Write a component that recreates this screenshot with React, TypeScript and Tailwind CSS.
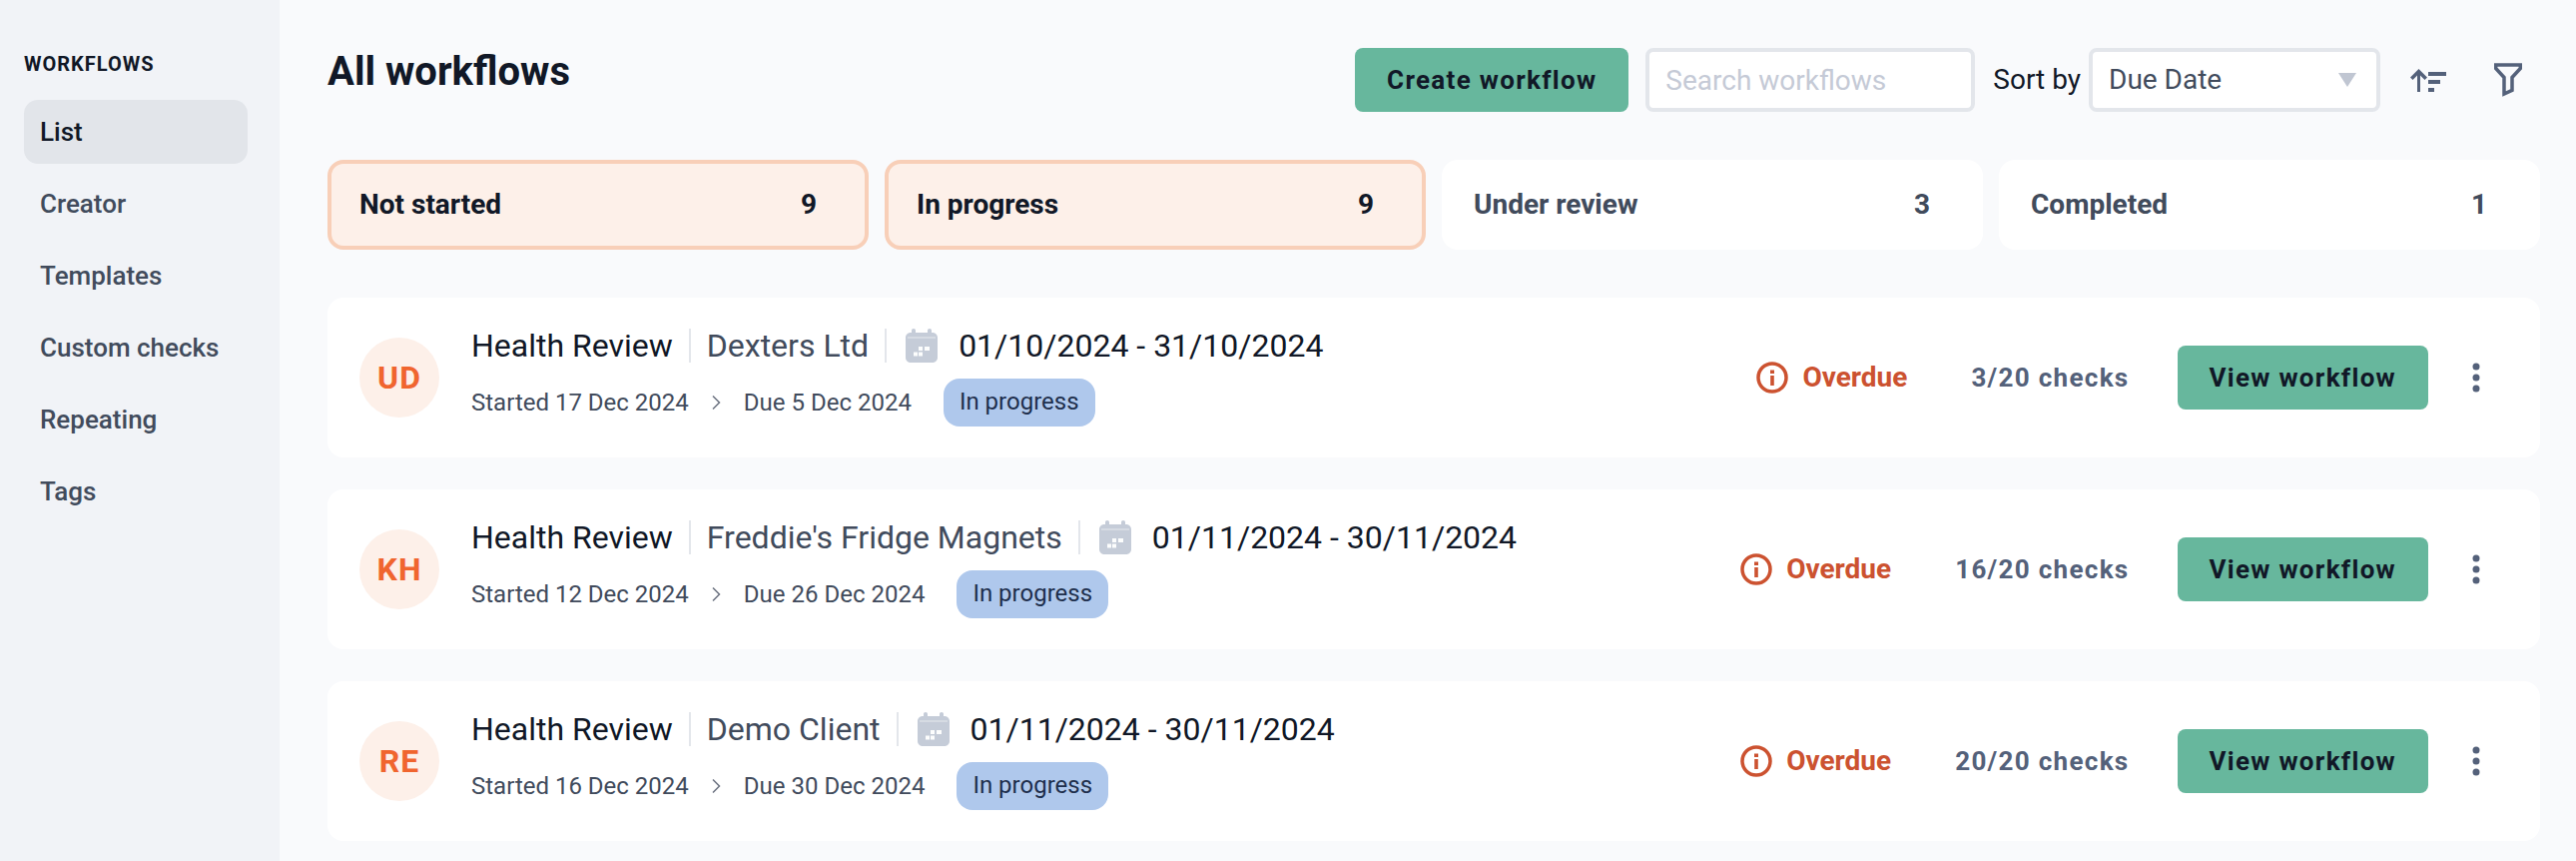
import React from 'react';

const navItems = ['List', 'Creator', 'Templates', 'Custom checks', 'Repeating', 'Tags'];

const tabs = [
  { label: 'Not started', count: 9, active: true },
  { label: 'In progress', count: 9, active: true },
  { label: 'Under review', count: 3, active: false },
  { label: 'Completed', count: 1, active: false },
];

const workflows = [
  { initials: 'UD', client: 'Dexters Ltd', period: '01/10/2024 - 31/10/2024', started: 'Started 17 Dec 2024', due: 'Due 5 Dec 2024', checks: '3/20 checks' },
  { initials: 'KH', client: "Freddie's Fridge Magnets", period: '01/11/2024 - 30/11/2024', started: 'Started 12 Dec 2024', due: 'Due 26 Dec 2024', checks: '16/20 checks' },
  { initials: 'RE', client: 'Demo Client', period: '01/11/2024 - 30/11/2024', started: 'Started 16 Dec 2024', due: 'Due 30 Dec 2024', checks: '20/20 checks' },
];

const CalendarIcon = () => (
  <svg width="32" height="34" viewBox="0 0 32 34" className="shrink-0">
    <path
      fill="#c5ccd8"
      d="M8 0c1.300 0 2 .9 2 2v2h12V2c0-1.100.7-2 2-2s2 .9 2 2v2h1c2.800 0 5 2.200 5 5v20c0 2.800-2.200 5-5 5H5c-2.800 0-5-2.200-5-5V9c0-2.800 2.200-5 5-5h1V2c0-1.100.7-2 2-2Z"
    />
    <path fill="#fff" d="M2 8.500h28v1H2z" opacity="0.6" />
    <path fill="#fff" d="M13 18h4v4h-4zM19 18h5v4h-5zM8 23.500h4v4H8zM13 23.500h4v4h-4z" opacity="0.95" />
  </svg>
);

const SortIcon = () => (
  <svg width="36" height="24" viewBox="0 0 36 24" fill="#54617a">
    <path d="M7 24V7.500L2.500 12 0 9.500 8.500 1 17 9.500 14.500 12 10 7.500V24H7Z" />
    <path d="M18 4h18v4H18zM18 12h12v4H18zM18 20h6v4h-6z" />
  </svg>
);

const FilterIcon = () => (
  <svg width="28" height="34" viewBox="0 0 28 34" fill="none" stroke="#54617a" strokeWidth="3.500">
    <path d="M1.700 2h24.600v3.500L18 14.500v12.800l-8 3.700V14.500L1.700 5.500V2Z" />
  </svg>
);

const InfoIcon = () => (
  <svg width="32" height="32" viewBox="0 0 32 32" fill="none" className="shrink-0">
    <circle cx="16" cy="16" r="14" stroke="#cc5230" strokeWidth="3.500" />
    <path d="M14 8.500h4v3.500h-4zM14.200 14h3.600v10h-3.600z" fill="#cc5230" />
  </svg>
);

const ChevronIcon = () => (
  <svg width="10" height="16" viewBox="0 0 10 16" fill="none" stroke="#6b7280" strokeWidth="1.500">
    <path d="M2 1.500 8.500 8 2 14.500" />
  </svg>
);

const DotsIcon = () => (
  <svg width="8" height="30" viewBox="0 0 8 30" fill="#54617a">
    <circle cx="4" cy="4" r="3.500" />
    <circle cx="4" cy="15" r="3.500" />
    <circle cx="4" cy="26" r="3.500" />
  </svg>
);

export default function App() {
  return (
    <div className="flex h-[862px] overflow-hidden bg-[#f9fafc] font-['Roboto',sans-serif]">
      <aside className="w-[280px] shrink-0 bg-[#f1f3f7] pt-[52px] pr-8 pl-6">
        <h2 className="text-[20px] leading-6 font-bold tracking-[1px] text-[#111827]">WORKFLOWS</h2>
        <nav className="mt-6 flex flex-col gap-2">
          {navItems.map((item, i) => (
            <div
              key={item}
              className={`flex h-16 items-center rounded-[14px] px-4 text-[26px] font-medium ${
                i === 0 ? 'bg-[#e2e5ea] font-bold text-[#111827]' : 'text-[#414b5c]'
              }`}
            >
              {item}
            </div>
          ))}
        </nav>
      </aside>

      <main className="min-w-0 flex-1 pt-12 pr-9 pl-12">
        <header className="flex h-16 items-center justify-between">
          <h1 className="-mt-4 text-[40px] font-bold text-[#111827]">All workflows</h1>
          <div className="flex items-center">
            <button className="h-16 rounded-lg bg-[#67b79d] px-8 text-[26px] font-bold tracking-[1.3px] text-[#111827]">
              Create workflow
            </button>
            <input
              placeholder="Search workflows"
              className="ml-[17px] h-16 w-[330px] rounded-lg border-4 border-[#e3e6eb] bg-white px-4 text-[28px] outline-none placeholder:text-[#c5cad6]"
            />
            <span className="ml-[18px] text-[28px] text-[#111827]">Sort by</span>
            <div className="ml-2 flex h-16 w-[292px] items-center justify-between rounded-lg border-4 border-[#e3e6eb] bg-white pr-5 pl-4 text-[28px] text-[#414b5c]">
              Due Date
              <span className="h-0 w-0 border-x-[9px] border-t-[14px] border-x-transparent border-t-[#c0c6d2]" />
            </div>
            <span className="ml-[30px] flex">
              <SortIcon />
            </span>
            <span className="mr-[18px] ml-12 flex">
              <FilterIcon />
            </span>
          </div>
        </header>

        <div className="mt-12 grid grid-cols-4 gap-4">
          {tabs.map(tab => (
            <div
              key={tab.label}
              className={`flex h-[90px] items-center justify-between rounded-2xl text-[28px] font-bold ${
                tab.active
                  ? 'border-4 border-[#f8cfb8] bg-[#fdf0e9] pr-12 pl-7 text-[#111827]'
                  : 'bg-white pr-[53px] pl-8 text-[#414b5c]'
              }`}
            >
              <span>{tab.label}</span>
              <span>{tab.count}</span>
            </div>
          ))}
        </div>

        <div className="mt-12 flex flex-col gap-8">
          {workflows.map(w => (
            <div key={w.initials} className="flex h-40 items-center rounded-2xl bg-white px-8">
              <div className="flex h-20 w-20 shrink-0 items-center justify-center rounded-full bg-[#fdf0e9] text-[32px] font-bold tracking-[1px] text-[#f0652f]">
                {w.initials}
              </div>
              <div className="ml-8 flex flex-col">
                <div className="flex h-[34px] items-center">
                  <span className="text-[32px] text-[#111827]">Health Review</span>
                  <span className="mx-4 h-[34px] w-0.5 bg-[#e3e6eb]" />
                  <span className="text-[32px] text-[#414b5c]">{w.client}</span>
                  <span className="mr-[19px] ml-4 h-[34px] w-0.5 bg-[#e3e6eb]" />
                  <CalendarIcon />
                  <span className="ml-[21px] text-[32px] text-[#111827]">{w.period}</span>
                </div>
                <div className="mt-4 flex h-12 items-center text-2xl text-[#414b5c]">
                  <span>{w.started}</span>
                  <span className="mr-[23px] ml-[22px] flex">
                    <ChevronIcon />
                  </span>
                  <span>{w.due}</span>
                  <span className="ml-8 flex h-12 items-center rounded-2xl bg-[#afc8ec] px-4 pb-0.5 text-[#1e2f4d]">
                    In progress
                  </span>
                </div>
              </div>

              <div className="ml-auto flex items-center">
                <InfoIcon />
                <span className="ml-3.5 text-[28px] font-bold text-[#cc5230]">Overdue</span>
                <span className="ml-16 text-[26px] font-bold tracking-[1.3px] text-[#54617a]">{w.checks}</span>
                <button className="ml-12 h-16 rounded-lg bg-[#67b79d] px-8 text-[26px] font-bold tracking-[1.3px] text-[#111827]">
                  View workflow
                </button>
                <span className="mr-[28px] ml-11 flex">
                  <DotsIcon />
                </span>
              </div>
            </div>
          ))}
        </div>
      </main>
    </div>
  );
}
